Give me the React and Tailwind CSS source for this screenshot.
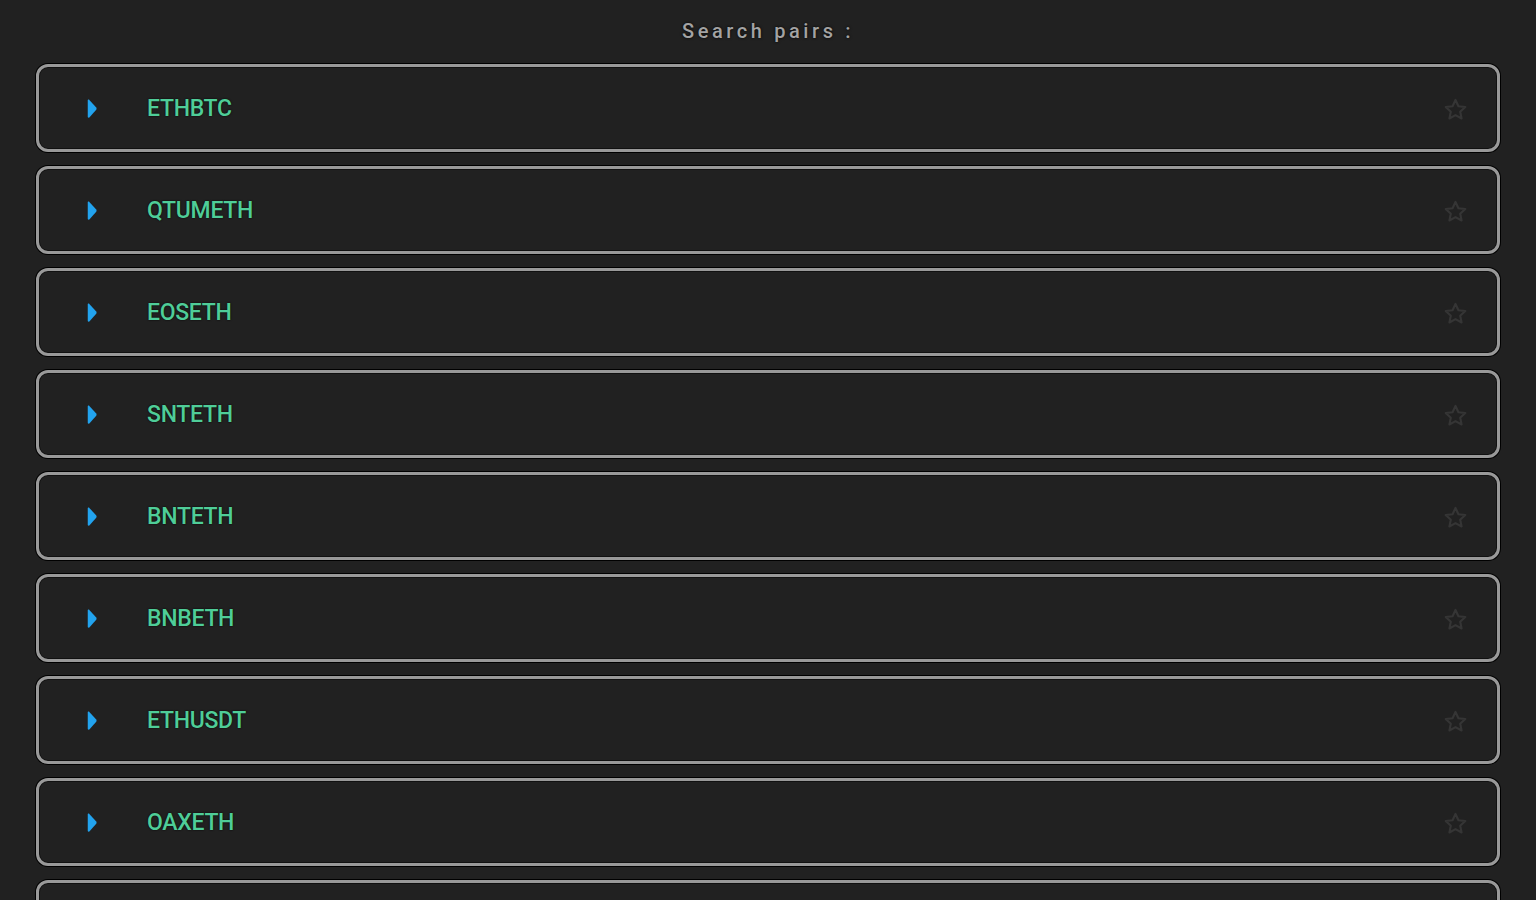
import React from "react";

const pairs = [
  "ETHBTC",
  "QTUMETH",
  "EOSETH",
  "SNTETH",
  "BNTETH",
  "BNBETH",
  "ETHUSDT",
  "OAXETH",
  "MCOETH",
];

const ArrowRight = () => (
  <svg width="14" height="22" viewBox="9.2 5.2 7 14" className="shrink-0">
    <path
      d="M10 17.2V6.8c0-.5.6-.8 1-.4l4.4 4.9c.3.4.3.9 0 1.3L11 17.6c-.4.4-1 .1-1-.4z"
      fill="#22a3ee"
    />
  </svg>
);

const StarOutline = () => (
  <svg width="27" height="27" viewBox="0 0 24 24" className="shrink-0">
    <path
      d="M12 3.5l2.6 5.6 6.1.7-4.5 4.2 1.2 6-5.4-3-5.4 3 1.2-6-4.5-4.2 6.1-.7z"
      fill="none"
      stroke="#353535"
      strokeWidth="1.9"
      strokeLinejoin="round"
    />
  </svg>
);

const PairRow = ({ name }) => (
  <div className="h-[88px] rounded-[12px] border-[3px] border-[#999999] bg-[#212121] shadow-[0_0_0_1px_#000,inset_0_0_0_1px_#111] flex items-center pl-[46px] pr-[28px] pt-[2px]">
    <ArrowRight />
    <span className="ml-[48px] text-[23px] font-medium tracking-[-0.3px] text-[#4fcd98] [text-shadow:0_0_2px_#000]">
      {name}
    </span>
    <div className="flex-1" />
    <StarOutline />
  </div>
);

export default function App() {
  return (
    <div
      className="min-h-screen bg-[#212121] px-[36px] pt-[18px]"
      style={{ fontFamily: "Roboto, 'Liberation Sans', sans-serif" }}
    >
      <div className="text-center text-[20px] leading-[26px] font-medium tracking-[3.6px] text-[#a3a3a3] [text-shadow:0_0_3px_#000]">
        Search pairs :
      </div>
      <div className="mt-[20px] flex flex-col gap-[14px]">
        {pairs.map((p) => (
          <PairRow key={p} name={p} />
        ))}
      </div>
    </div>
  );
}
